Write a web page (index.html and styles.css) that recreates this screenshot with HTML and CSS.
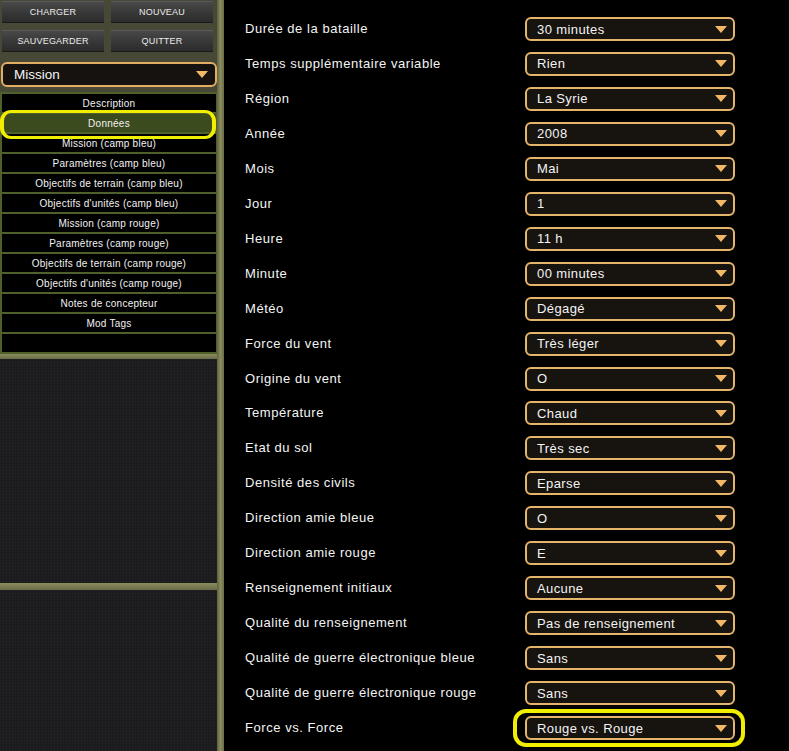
FILE: index.html
```html
<!DOCTYPE html>
<html lang="fr">
<head>
<meta charset="utf-8">
<title>Mission - Données</title>
<link rel="stylesheet" href="styles.css">
</head>
<body>
<div class="app">
  <aside class="sidebar">
    <div class="sidebar-inner">
      <div class="top">
        <div class="buttons">
          <div class="btn">CHARGER</div>
          <div class="btn">NOUVEAU</div>
          <div class="btn">SAUVEGARDER</div>
          <div class="btn">QUITTER</div>
        </div>
        <div class="mission-select">
          <span>Mission</span>
          <svg class="arrow" width="12" height="7" viewBox="0 0 12 7"><polygon points="0,0 12,0 6,7" fill="#f2b868"/></svg>
        </div>
      </div>
      <div class="nav">
        <div class="nav-item">Description</div>
        <div class="nav-item selected">Données<span class="hl hl-nav"></span></div>
        <div class="nav-item">Mission (camp bleu)</div>
        <div class="nav-item">Paramètres (camp bleu)</div>
        <div class="nav-item">Objectifs de terrain (camp bleu)</div>
        <div class="nav-item">Objectifs d'unités (camp bleu)</div>
        <div class="nav-item">Mission (camp rouge)</div>
        <div class="nav-item">Paramètres (camp rouge)</div>
        <div class="nav-item">Objectifs de terrain (camp rouge)</div>
        <div class="nav-item">Objectifs d'unités (camp rouge)</div>
        <div class="nav-item">Notes de concepteur</div>
        <div class="nav-item">Mod Tags</div>
        <div class="nav-item"></div>
      </div>
      <div class="bar"></div>
      <div class="panel panel-1"></div>
      <div class="bar bar-2"></div>
      <div class="panel panel-2"></div>
    </div>
    <div class="stripe"></div>
  </aside>
  <main class="main">
    <div class="row"><div class="label">Durée de la bataille</div><div class="select"><span>30 minutes</span><svg class="arrow" width="12" height="7" viewBox="0 0 12 7"><polygon points="0,0 12,0 6,7" fill="#f2b868"/></svg></div></div>
    <div class="row"><div class="label">Temps supplémentaire variable</div><div class="select"><span>Rien</span><svg class="arrow" width="12" height="7" viewBox="0 0 12 7"><polygon points="0,0 12,0 6,7" fill="#f2b868"/></svg></div></div>
    <div class="row"><div class="label">Région</div><div class="select"><span>La Syrie</span><svg class="arrow" width="12" height="7" viewBox="0 0 12 7"><polygon points="0,0 12,0 6,7" fill="#f2b868"/></svg></div></div>
    <div class="row"><div class="label">Année</div><div class="select"><span>2008</span><svg class="arrow" width="12" height="7" viewBox="0 0 12 7"><polygon points="0,0 12,0 6,7" fill="#f2b868"/></svg></div></div>
    <div class="row"><div class="label">Mois</div><div class="select"><span>Mai</span><svg class="arrow" width="12" height="7" viewBox="0 0 12 7"><polygon points="0,0 12,0 6,7" fill="#f2b868"/></svg></div></div>
    <div class="row"><div class="label">Jour</div><div class="select"><span>1</span><svg class="arrow" width="12" height="7" viewBox="0 0 12 7"><polygon points="0,0 12,0 6,7" fill="#f2b868"/></svg></div></div>
    <div class="row"><div class="label">Heure</div><div class="select"><span>11 h</span><svg class="arrow" width="12" height="7" viewBox="0 0 12 7"><polygon points="0,0 12,0 6,7" fill="#f2b868"/></svg></div></div>
    <div class="row"><div class="label">Minute</div><div class="select"><span>00 minutes</span><svg class="arrow" width="12" height="7" viewBox="0 0 12 7"><polygon points="0,0 12,0 6,7" fill="#f2b868"/></svg></div></div>
    <div class="row"><div class="label">Météo</div><div class="select"><span>Dégagé</span><svg class="arrow" width="12" height="7" viewBox="0 0 12 7"><polygon points="0,0 12,0 6,7" fill="#f2b868"/></svg></div></div>
    <div class="row"><div class="label">Force du vent</div><div class="select"><span>Très léger</span><svg class="arrow" width="12" height="7" viewBox="0 0 12 7"><polygon points="0,0 12,0 6,7" fill="#f2b868"/></svg></div></div>
    <div class="row"><div class="label">Origine du vent</div><div class="select"><span>O</span><svg class="arrow" width="12" height="7" viewBox="0 0 12 7"><polygon points="0,0 12,0 6,7" fill="#f2b868"/></svg></div></div>
    <div class="row"><div class="label">Température</div><div class="select"><span>Chaud</span><svg class="arrow" width="12" height="7" viewBox="0 0 12 7"><polygon points="0,0 12,0 6,7" fill="#f2b868"/></svg></div></div>
    <div class="row"><div class="label">Etat du sol</div><div class="select"><span>Très sec</span><svg class="arrow" width="12" height="7" viewBox="0 0 12 7"><polygon points="0,0 12,0 6,7" fill="#f2b868"/></svg></div></div>
    <div class="row"><div class="label">Densité des civils</div><div class="select"><span>Eparse</span><svg class="arrow" width="12" height="7" viewBox="0 0 12 7"><polygon points="0,0 12,0 6,7" fill="#f2b868"/></svg></div></div>
    <div class="row"><div class="label">Direction amie bleue</div><div class="select"><span>O</span><svg class="arrow" width="12" height="7" viewBox="0 0 12 7"><polygon points="0,0 12,0 6,7" fill="#f2b868"/></svg></div></div>
    <div class="row"><div class="label">Direction amie rouge</div><div class="select"><span>E</span><svg class="arrow" width="12" height="7" viewBox="0 0 12 7"><polygon points="0,0 12,0 6,7" fill="#f2b868"/></svg></div></div>
    <div class="row"><div class="label">Renseignement initiaux</div><div class="select"><span>Aucune</span><svg class="arrow" width="12" height="7" viewBox="0 0 12 7"><polygon points="0,0 12,0 6,7" fill="#f2b868"/></svg></div></div>
    <div class="row"><div class="label">Qualité du renseignement</div><div class="select"><span>Pas de renseignement</span><svg class="arrow" width="12" height="7" viewBox="0 0 12 7"><polygon points="0,0 12,0 6,7" fill="#f2b868"/></svg></div></div>
    <div class="row"><div class="label">Qualité de guerre électronique bleue</div><div class="select"><span>Sans</span><svg class="arrow" width="12" height="7" viewBox="0 0 12 7"><polygon points="0,0 12,0 6,7" fill="#f2b868"/></svg></div></div>
    <div class="row"><div class="label">Qualité de guerre électronique rouge</div><div class="select"><span>Sans</span><svg class="arrow" width="12" height="7" viewBox="0 0 12 7"><polygon points="0,0 12,0 6,7" fill="#f2b868"/></svg></div></div>
    <div class="row"><div class="label">Force vs. Force</div><div class="select"><span>Rouge vs. Rouge</span><svg class="arrow" width="12" height="7" viewBox="0 0 12 7"><polygon points="0,0 12,0 6,7" fill="#f2b868"/></svg><span class="hl hl-select"></span></div></div>
  </main>
</div>
</body>
</html>
```

FILE: styles.css
```css
html, body {
  margin: 0;
  padding: 0;
  background: #000;
  height: 100%;
  overflow: hidden;
}

body {
  font-family: "Liberation Sans", Arial, sans-serif;
  color: #f2f2f2;
}

.app {
  display: flex;
  height: 751px;
}

/* ---------- Sidebar ---------- */
.sidebar {
  display: flex;
  width: 224px;
  flex: none;
  height: 100%;
}

.sidebar-inner {
  width: 217px;
  display: flex;
  flex-direction: column;
  background: #4b4c38;
}

.stripe {
  width: 7px;
  background: linear-gradient(to right, #5e6040, #8a8c5c 50%, #6a6c48);
}

.top {
  padding: 1px 0 5px 1px;
  background: #474836;
}

.buttons {
  display: grid;
  grid-template-columns: 102px 102px;
  column-gap: 7px;
  row-gap: 7px;
  padding-left: 1px;
}

.btn {
  height: 21px;
  background: linear-gradient(to bottom, #4a4a4a, #363636 60%, #2c2c2c);
  border-bottom: 1px solid #1a1a1a;
  box-shadow: inset 0 1px 0 #5a5a5a;
  color: #ececec;
  font-size: 9px;
  display: flex;
  align-items: center;
  justify-content: center;
  letter-spacing: 0.2px;
}

.mission-select {
  margin-top: 10px;
  height: 21px;
  border: 2px solid #e3ae64;
  border-radius: 6px;
  background: #15120f;
  display: flex;
  align-items: center;
  justify-content: space-between;
  padding: 0 7px 0 11px;
  font-size: 13.5px;
  color: #f4f4f4;
}

.nav {
  display: flex;
  flex-direction: column;
  gap: 2px;
  padding: 2px 1px 2px 2px;
  background: #50602c;
}

.nav-item {
  position: relative;
  height: 18px;
  background: #000;
  color: #f2f2f2;
  font-size: 10px;
  letter-spacing: 0.25px;
  display: flex;
  align-items: center;
  justify-content: center;
}

.nav-item.selected {
  background: #3c4b1e;
  z-index: 2;
}

.bar {
  height: 5px;
  background: linear-gradient(to bottom, #8a8c5c, #6a6c48);
}

.bar-2 {
  height: 7px;
}

.panel {
  background-color: #1b1b1d;
  background-image:
    repeating-linear-gradient(to right, rgba(255,255,255,0.015) 0 1px, transparent 1px 3px),
    repeating-linear-gradient(to bottom, rgba(255,255,255,0.015) 0 1px, transparent 1px 3px);
}

.panel-1 {
  height: 224px;
}

.panel-2 {
  flex: 1;
}

/* ---------- Main ---------- */
.main {
  flex: 1;
  display: flex;
  flex-direction: column;
  padding: 17px 0 0 21px;
}

.row {
  display: flex;
  height: 35px;
  align-items: flex-start;
}

.label {
  width: 280px;
  font-size: 13px;
  line-height: 24px;
  letter-spacing: 0.55px;
  color: #f4f4f4;
}

.select {
  position: relative;
  height: 20px;
  border: 2px solid #e6b56c;
  border-radius: 6px;
  background: #17130f;
  display: flex;
  align-items: center;
  justify-content: space-between;
  padding: 0 6px 0 10px;
  box-sizing: content-box;
  width: 190px;
  font-size: 13px;
  letter-spacing: 0.4px;
  color: #f4f4f4;
}

.arrow {
  flex: none;
}

/* ---------- Annotation highlights ---------- */
.hl {
  position: absolute;
  border: 3px solid #f2ee00;
  border-radius: 12px;
  pointer-events: none;
  z-index: 3;
}

.hl-nav {
  left: -2px;
  right: 0;
  top: -4px;
  bottom: -7px;
  border-width: 3px 4px;
  border-radius: 11px;
}

.hl-select {
  left: -14px;
  right: -12px;
  top: -9px;
  bottom: -9px;
  border-width: 4px;
  border-radius: 13px;
}
```
